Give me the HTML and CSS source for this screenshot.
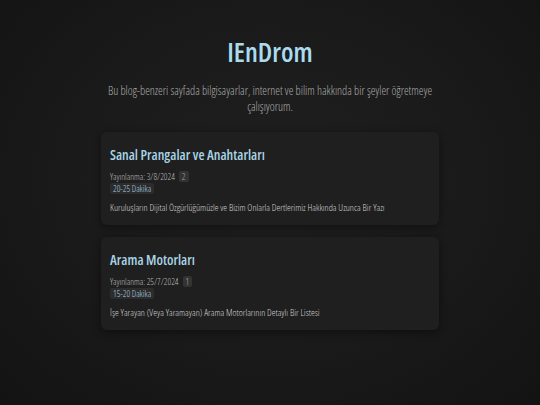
FILE: index.html
```html
<!DOCTYPE html>
<html lang="tr">
<head>
<meta charset="utf-8">
<title>IEnDrom</title>
<link rel="stylesheet" href="styles.css">
</head>
<body>
<div class="page">
  <header class="hero">
    <h1 class="site-title">IEnDrom</h1>
    <p class="intro">Bu blog-benzeri sayfada bilgisayarlar, internet ve bilim hakkında bir şeyler öğretmeye çalışıyorum.</p>
  </header>
  <main class="posts">
    <article class="card">
      <h2 class="card-title">Sanal Prangalar ve Anahtarları</h2>
      <div class="meta"><span>Yayınlanma: 3/8/2024</span><span class="count">2</span></div>
      <div class="tags"><span class="tag">20-25 Dakika</span></div>
      <p class="desc">Kuruluşların Dijital Özgürlüğümüzle ve Bizim Onlarla Dertlerimiz Hakkında Uzunca Bir Yazı</p>
    </article>
    <article class="card">
      <h2 class="card-title">Arama Motorları</h2>
      <div class="meta"><span>Yayınlanma: 25/7/2024</span><span class="count">1</span></div>
      <div class="tags"><span class="tag">15-20 Dakika</span></div>
      <p class="desc">İşe Yarayan (Veya Yaramayan) Arama Motorlarının Detaylı Bir Listesi</p>
    </article>
  </main>
</div>
</body>
</html>
```

FILE: styles.css
```css
html, body {
  margin: 0;
  padding: 0;
  height: 100%;
}
body {
  background: radial-gradient(ellipse at 50% 45%, #1f1f1f 0%, #1b1b1b 45%, #131313 100%);
  color: #c8c8c8;
  font-family: "Open Sans", "Noto Sans", sans-serif;
  font-stretch: 75%;
}
.page {
  width: 338px;
  margin: 0 auto;
  padding-top: 34px;
}
.hero {
  text-align: center;
}
.site-title {
  margin: 0;
  font-size: 27px;
  font-weight: 600;
  color: #a9dcef;
  line-height: 36px;
}
.intro {
  margin: 12px -8px 0;
  font-size: 11.8px;
  font-weight: 300;
  line-height: 16px;
  color: #ababab;
}
.posts {
  margin-top: 18px;
  display: flex;
  flex-direction: column;
  gap: 12px;
}
.card {
  background: #1f1f1f;
  border-radius: 6px;
  padding: 13px 9px 10px;
  box-shadow: 0 2px 8px rgba(0,0,0,0.45);
}
.card-title {
  margin: 0;
  font-size: 14px;
  font-weight: 600;
  color: #a9d4e6;
  line-height: 20px;
}
.meta {
  margin-top: 6px;
  display: flex;
  align-items: center;
  gap: 4px;
  font-size: 9px;
  font-weight: 300;
  color: #bdbdbd;
  line-height: 11px;
}
.count {
  background: #333;
  border-radius: 2px;
  padding: 0 3px;
  color: #aaa;
}
.tags {
  margin-top: 1px;
  display: flex;
}
.tag {
  background: #2c2c2c;
  border-radius: 2px;
  padding: 0 3px;
  font-size: 9px;
  font-weight: 300;
  line-height: 11px;
  color: #a9cfe0;
}
.desc {
  margin: 7px 0 0;
  font-size: 9.6px;
  font-weight: 300;
  line-height: 14px;
  color: #d2d2d2;
}
```
